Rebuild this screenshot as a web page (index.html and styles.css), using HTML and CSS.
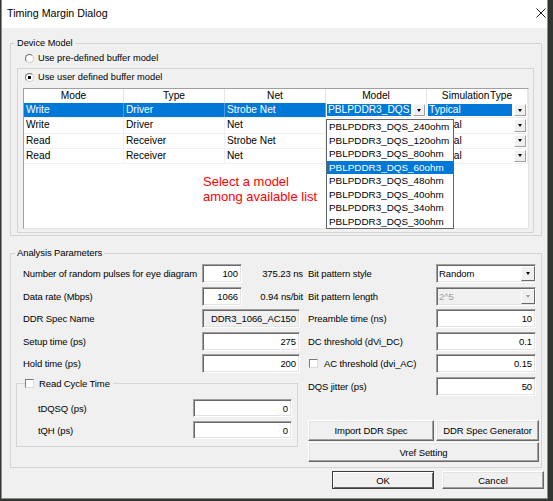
FILE: index.html
```html
<!DOCTYPE html>
<html>
<head>
	<meta charset="utf-8">
	<link rel="stylesheet" href="styles.css">
	<title>Timing Margin Dialog</title>
</head>
<body>
	<div class="window">
		<div class="titlebar">
			<span class="title">Timing Margin Dialog</span>
			<svg class="close" width="10" height="10" viewBox="0 0 10 10"><path d="M0.5 0.5L9.5 9.5M9.5 0.5L0.5 9.5" stroke="#1a1a1a" stroke-width="1"/></svg>
		</div>
		<div class="client">
			<fieldset class="group device">
				<legend>Device Model</legend>
				<div class="radio-row"><span class="radio"></span>Use pre-defined buffer model</div>
				<div class="subgroup">
					<div class="radio-row"><span class="radio on"></span>Use user defined buffer model</div>
					<div class="list">
						<div class="list-head">
							<div>Mode</div>
							<div>Type</div>
							<div>Net</div>
							<div>Model</div>
							<div class="sim-head">Simulation Type</div>
						</div>
						<div class="list-row selected">
							<div class="cell">Write</div>
							<div class="cell">Driver</div>
							<div class="cell">Strobe Net</div>
							<div class="cell combo-cell">
								<span class="value hl">PBLPDDR3_DQS_60ohm</span><span class="drop-btn"></span>
								<ul class="droplist">
									<li>PBLPDDR3_DQS_240ohm</li>
									<li>PBLPDDR3_DQS_120ohm</li>
									<li>PBLPDDR3_DQS_80ohm</li>
									<li class="active">PBLPDDR3_DQS_60ohm</li>
									<li>PBLPDDR3_DQS_48ohm</li>
									<li>PBLPDDR3_DQS_40ohm</li>
									<li>PBLPDDR3_DQS_34ohm</li>
									<li>PBLPDDR3_DQS_30ohm</li>
								</ul>
							</div>
							<div class="cell combo-cell"><span class="value hl">Typical</span><span class="drop-btn"></span></div>
						</div>
						<div class="list-row">
							<div class="cell">Write</div>
							<div class="cell">Driver</div>
							<div class="cell">Net</div>
							<div class="cell"></div>
							<div class="cell combo-cell"><span class="value">Typical</span><span class="drop-btn"></span></div>
						</div>
						<div class="list-row">
							<div class="cell">Read</div>
							<div class="cell">Receiver</div>
							<div class="cell">Strobe Net</div>
							<div class="cell"></div>
							<div class="cell combo-cell"><span class="value">Typical</span><span class="drop-btn"></span></div>
						</div>
						<div class="list-row">
							<div class="cell">Read</div>
							<div class="cell">Receiver</div>
							<div class="cell">Net</div>
							<div class="cell"></div>
							<div class="cell combo-cell"><span class="value">Typical</span><span class="drop-btn"></span></div>
						</div>
						<div class="hint">Select a model<br>among available list</div>
					</div>
				</div>
			</fieldset>

			<fieldset class="group analysis">
				<legend>Analysis Parameters</legend>
				<div class="analysis-body">
					<div class="col-left">
						<div class="param">
							<span class="param-label">Number of random pulses for eye diagram</span>
							<input class="field short" type="text" value="100">
							<span class="unit">375.23 ns</span>
						</div>
						<div class="param">
							<span class="param-label">Data rate (Mbps)</span>
							<input class="field short" type="text" value="1066">
							<span class="unit">0.94 ns/bit</span>
						</div>
						<div class="param">
							<span class="param-label">DDR Spec Name</span>
							<input class="field long readonly" type="text" value="DDR3_1066_AC150" readonly>
						</div>
						<div class="param">
							<span class="param-label">Setup time (ps)</span>
							<input class="field long" type="text" value="275">
						</div>
						<div class="param">
							<span class="param-label">Hold time (ps)</span>
							<input class="field long" type="text" value="200">
						</div>
						<fieldset class="group rct">
							<legend><span class="check"></span>Read Cycle Time</legend>
							<div class="rct-body">
								<div class="param">
									<span class="param-label">tDQSQ (ps)</span>
									<input class="field mid" type="text" value="0">
								</div>
								<div class="param">
									<span class="param-label">tQH (ps)</span>
									<input class="field mid" type="text" value="0">
								</div>
							</div>
						</fieldset>
					</div>
					<div class="col-right">
						<div class="param">
							<span class="param-label">Bit pattern style</span>
							<div class="combo"><span class="value">Random</span><span class="drop-btn"></span></div>
						</div>
						<div class="param">
							<span class="param-label">Bit pattern length</span>
							<div class="combo disabled"><span class="value">2^5</span><span class="drop-btn"></span></div>
						</div>
						<div class="param">
							<span class="param-label">Preamble time (ns)</span>
							<input class="field wide" type="text" value="10">
						</div>
						<div class="param">
							<span class="param-label">DC threshold (dVi_DC)</span>
							<input class="field wide" type="text" value="0.1">
						</div>
						<div class="param">
							<span class="param-label check-label"><span class="check"></span>AC threshold (dvi_AC)</span>
							<input class="field wide" type="text" value="0.15">
						</div>
						<div class="param">
							<span class="param-label">DQS jitter (ps)</span>
							<input class="field wide" type="text" value="50">
						</div>
						<div class="tool-buttons">
							<button class="btn">Import DDR Spec</button>
							<button class="btn">DDR Spec Generator</button>
							<button class="btn vref">Vref Setting</button>
						</div>
					</div>
				</div>
			</fieldset>

			<div class="dialog-buttons">
				<button class="btn default">OK</button>
				<button class="btn">Cancel</button>
			</div>
		</div>
	</div>
</body>
</html>
```

FILE: styles.css
```css
* {
	box-sizing: border-box;
}
body {
	margin: 0;
	background: #313633;
	font-family: "Liberation Sans", Arial, sans-serif;
	color: #000;
}
.window {
	margin-left: 1px;
	width: 547px;
	height: 499px;
	border: 1px solid #8c8c8c;
	border-top: 0;
	background: #f0f0f0;
}
.titlebar {
	display: flex;
	align-items: center;
	justify-content: space-between;
	height: 28px;
	padding: 0 1px 2px 5px;
	background: #fff;
}
.title {
	font-size: 10.7px;
	line-height: 14px;
}
.client {
	padding: 9px 0 0 8px;
}

/* group boxes */
fieldset.group {
	margin: 0;
	padding: 0;
	min-width: 0;
	border: 1px solid #d5d5d5;
}
.group > legend {
	margin-left: 4px;
	padding: 0 2px;
	line-height: 12px;
}
.device {
	width: 532px;
}
.device > legend {
	font-size: 9.2px;
}
.radio-row {
	display: flex;
	align-items: center;
	gap: 4px;
	height: 16px;
	font-size: 9.3px;
}
.device > .radio-row {
	margin: 1px 0 0 14px;
}
.radio {
	width: 9px;
	height: 9px;
	border-radius: 50%;
	border: 1px solid;
	border-color: #6f6f6f #cfcfcf #cfcfcf #6f6f6f;
	background: #fff;
}
.radio.on {
	background: radial-gradient(circle, #000 1.4px, #fff 2px);
}
.subgroup {
	margin: 2px 7px 2px 6px;
	padding: 0 0 3px 0;
	border: 1px solid #d5d5d5;
}
.subgroup .radio-row {
	margin-left: 7px;
}

/* list control */
.list {
	margin: 3px 0 0 5px;
	width: 506px;
	height: 141px;
	border: 1px solid;
	border-color: #a0a0a0 #e3e3e3 #e3e3e3 #a0a0a0;
	background: #fff;
	font-size: 10.2px;
}
.list-head,
.list-row {
	display: grid;
	grid-template-columns: 100px 101px 101px 101px 101px;
}
.list-head {
	height: 14px;
	line-height: 14px;
	text-align: center;
}
.list-head div {
	border-right: 1px solid #e5e5e5;
}
.sim-head {
	word-spacing: -2px;
}
.list-row {
	height: 15.25px;
	line-height: 14px;
	border-bottom: 1px solid #f0f0f0;
}
.cell {
	padding-left: 2px;
	border-right: 1px solid #f0f0f0;
	white-space: nowrap;
	overflow: hidden;
}
.selected .cell {
	background: #0078d7;
	color: #fff;
	border-right-color: #4f9be0;
}
.list-row .combo-cell,
.selected .combo-cell {
	display: flex;
	gap: 2px;
	padding: 1px;
	overflow: visible;
	position: relative;
	background: #fff;
	color: #000;
	border-right-color: #f0f0f0;
}
.combo-cell .value {
	flex: 1;
	overflow: hidden;
	padding-left: 2px;
	line-height: 12px;
}
.combo-cell .value.hl {
	padding-left: 1px;
	background: #0078d7;
	color: #fff;
}
.drop-btn {
	display: flex;
	align-items: center;
	justify-content: center;
	width: 12px;
	background: #f0f0f0;
	border: 1px solid;
	border-color: #fff #a0a0a0 #a0a0a0 #fff;
}
.drop-btn::after {
	content: "";
	border-style: solid;
	border-width: 3px 2.5px 0;
	border-color: #000 transparent transparent;
}
.droplist {
	position: absolute;
	left: 0;
	top: 16px;
	z-index: 2;
	width: 128px;
	height: 110px;
	margin: 0;
	padding: 0;
	list-style: none;
	border: 1px solid #646464;
	background: #fff;
	font-size: 9.9px;
}
.droplist li {
	height: 13.5px;
	line-height: 13.5px;
	padding-left: 2px;
	white-space: nowrap;
}
.droplist li.active {
	background: #0078d7;
	color: #fff;
}
.hint {
	margin: 10px 0 0 179px;
	color: #f00;
	font-size: 13px;
	line-height: 15px;
}

/* analysis parameters */
fieldset.analysis {
	width: 532px;
	margin-top: 11px;
	font-size: 9.5px;
	letter-spacing: -0.1px;
}
.analysis-body {
	display: flex;
	padding: 5px 0 5px 5px;
}
.col-left {
	width: 287px;
}
.col-right {
	width: 231px;
	margin-left: 5px;
}
.param {
	display: flex;
	align-items: center;
	height: 19px;
	margin-bottom: 3.5px;
	white-space: nowrap;
}
.col-left > .param {
	padding-left: 7px;
}
.col-left .param-label {
	width: 179px;
}
.col-right .param-label {
	width: 128px;
}
.unit {
	width: 61px;
	text-align: right;
}
.field {
	height: 19px;
	margin: 0;
	padding: 0 3px 0 0;
	border: 1px solid;
	border-color: #a0a0a0 #fff #fff #a0a0a0;
	box-shadow: inset 1px 1px #696969, inset -1px -1px #e3e3e3;
	background: #fff;
	font: inherit;
	letter-spacing: inherit;
	color: #000;
	text-align: right;
	outline: none;
}
.field.short {
	width: 40px;
}
.field.long {
	width: 98px;
}
.field.wide {
	width: 100px;
}
.field.readonly {
	background: #f0f0f0;
}
.check {
	flex: none;
	width: 9px;
	height: 9px;
	border: 1px solid;
	border-color: #7a7a7a #dcdcdc #dcdcdc #7a7a7a;
	background: #fff;
}
.check-label {
	display: flex;
	align-items: center;
	gap: 6px;
	padding-left: 1px;
}
.combo {
	display: flex;
	width: 100px;
	height: 19px;
	border: 1px solid;
	border-color: #a0a0a0 #fff #fff #a0a0a0;
	box-shadow: inset 1px 1px #696969, inset -1px -1px #e3e3e3;
	background: #fff;
}
.combo .value {
	flex: 1;
	padding-left: 2px;
	line-height: 17px;
}
.combo .drop-btn {
	width: 14px;
	margin: 1px 0;
	border-color: #fff #696969 #696969 #fff;
}
.combo.disabled {
	background: #f0f0f0;
	color: #a0a0a0;
}
.combo.disabled .drop-btn::after {
	border-top-color: #a0a0a0;
}

/* read cycle time */
.rct {
	width: 282px;
}
.rct > legend {
	display: flex;
	align-items: center;
	gap: 5px;
	height: 13px;
	margin-left: 8px;
	padding: 0 3px 0 0;
	line-height: 13px;
}
.rct-body {
	padding: 9.5px 0 7px 21px;
}
.rct .param {
	height: 18px;
	margin-bottom: 4px;
}
.rct .param:last-child {
	margin-bottom: 0;
}
.rct .param-label {
	width: 155px;
}
.field.mid {
	width: 99px;
	height: 18px;
}

/* buttons */
.btn {
	height: 21px;
	padding: 0;
	border: 1px solid;
	border-color: #fff #696969 #696969 #fff;
	box-shadow: inset -1px -1px #a0a0a0, inset 1px 1px #e3e3e3;
	background: #f0f0f0;
	font: inherit;
	letter-spacing: inherit;
	color: #000;
}
.tool-buttons {
	display: grid;
	grid-template-columns: 126px 103px;
	gap: 1px 2px;
	margin-top: 24.5px;
}
.vref {
	grid-column: 1 / 3;
	height: 20px;
}
.dialog-buttons {
	display: flex;
	justify-content: flex-end;
	gap: 8px;
	margin: 3px 3px 0 0;
	font-size: 9.5px;
}
.dialog-buttons .btn {
	width: 102px;
	height: 18px;
}
.btn.default {
	border-color: #3c3c3c;
	box-shadow: inset 1px 1px #fff, inset -1px -1px #696969;
}
```
